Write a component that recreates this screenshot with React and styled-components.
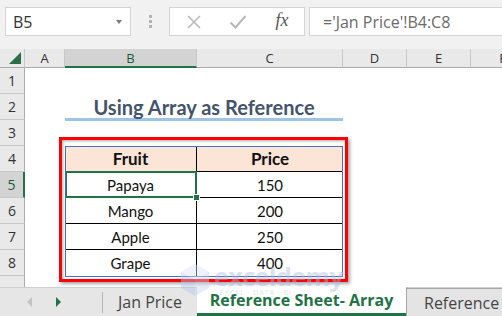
import React from "react";
import styled, { createGlobalStyle } from "styled-components";

const GlobalStyle = createGlobalStyle`
  html, body {
    margin: 0;
    padding: 0;
    background: #fff;
  }
  body {
    width: 502px;
    height: 316px;
    overflow: hidden;
    font-family: "Open Sans", "Noto Sans", sans-serif;
  }
`;

const columns = ["A", "B", "C", "D", "E", "F"];
const rows = [1, 2, 3, 4, 5, 6, 7, 8, 9];
const fruits = [
  ["Papaya", "150"],
  ["Mango", "200"],
  ["Apple", "250"],
  ["Grape", "400"],
];

const App = () => {
  return (
    <>
      <GlobalStyle />
      <Window>
        <FormulaBar>
          <NameBox>
            <span>B5</span>
            <Caret />
          </NameBox>
          <Dots>
            <Dot />
            <Dot />
            <Dot />
          </Dots>
          <FuncBox>
            <IconSlot>
              <svg width="16" height="16" viewBox="0 0 16 16">
                <path d="M2 2 L14 14 M14 2 L2 14" stroke="#b9b9b9" strokeWidth="1.6" fill="none" />
              </svg>
            </IconSlot>
            <IconSlot>
              <svg width="18" height="16" viewBox="0 0 18 16">
                <path d="M1.5 8.5 L6.5 13.5 L16.5 2" stroke="#b9b9b9" strokeWidth="2.2" fill="none" />
              </svg>
            </IconSlot>
            <IconSlot>
              <Fx>fx</Fx>
            </IconSlot>
          </FuncBox>
          <FormulaInput>='Jan Price'!B4:C8</FormulaInput>
        </FormulaBar>

        <SheetArea>
          <Grid>
            <Corner>
              <CornerMark />
            </Corner>
            {columns.map((c) => (
              <ColHeader key={c} $selected={c === "B"}>
                {c}
              </ColHeader>
            ))}
            {rows.map((r) => (
              <RowHeader key={r} $row={r + 1} $selected={r === 5}>
                {r < 9 ? r : ""}
              </RowHeader>
            ))}
            <Title>Using Array as Reference</Title>
            <Table>
              <TCell $head $first>
                Fruit
              </TCell>
              <TCell $head>Price</TCell>
              {fruits.map(([name, price], i) => (
                <React.Fragment key={name}>
                  <TCell $first $selected={i === 0} $last={i === fruits.length - 1}>
                    {name}
                  </TCell>
                  <TCell $last={i === fruits.length - 1}>{price}</TCell>
                </React.Fragment>
              ))}
            </Table>
          </Grid>
          <RedFrame />
        </SheetArea>

        <TabBar>
          <NavArrows>
            <ArrowLeft />
            <ArrowRight />
          </NavArrows>
          <TabDivider />
          <Tab $width={94}>Jan Price</Tab>
          <Tab $width={209} $active>
            Reference Sheet- Array
          </Tab>
          <Tab $width={110} $outlined>
            Reference
          </Tab>
        </TabBar>

        <Watermark>
          <svg width="30" height="34" viewBox="0 0 30 34">
            <path d="M15 1 L29 9 L29 25 L15 33 L1 25 L1 9 Z" fill="#c9d6ee" />
            <path d="M15 1 L29 9 L15 17 L1 9 Z" fill="#dbe4f4" />
            <path d="M15 17 L15 33 L1 25 L1 9 Z" fill="#b7c8e8" />
          </svg>
          <MarkText>
            <MarkName>exceldemy</MarkName>
            <MarkSub>EXCEL · DATA · BI</MarkSub>
          </MarkText>
        </Watermark>
      </Window>
    </>
  );
};

const Window = styled.div`
  position: relative;
  width: 502px;
  height: 316px;
  display: flex;
  flex-direction: column;
  overflow: hidden;
`;

const FormulaBar = styled.div`
  height: 49px;
  flex: none;
  box-sizing: border-box;
  padding-top: 7px;
  display: flex;
  align-items: flex-start;
  background: #f1f1f1;
`;

const Box = styled.div`
  height: 29px;
  flex: none;
  box-sizing: border-box;
  background: #fff;
  border: 1px solid #d4d4d4;
  display: flex;
  align-items: center;
`;

const NameBox = styled(Box)`
  margin-left: 5px;
  width: 126px;
  padding: 0 8px 0 7px;
  justify-content: space-between;
  font-size: 16px;
  color: #333;
`;

const Caret = styled.div`
  width: 0;
  height: 0;
  border-left: 3.5px solid transparent;
  border-right: 3.5px solid transparent;
  border-top: 4px solid #7a7a7a;
`;

const Dots = styled.div`
  width: 38px;
  height: 29px;
  flex: none;
  display: flex;
  flex-direction: column;
  align-items: center;
  justify-content: center;
  gap: 2px;
`;

const Dot = styled.div`
  width: 3px;
  height: 3px;
  background: #b3b3b3;
`;

const FuncBox = styled(Box)`
  width: 136px;
  padding-left: 2px;
`;

const IconSlot = styled.div`
  width: 44px;
  height: 100%;
  display: flex;
  align-items: center;
  justify-content: center;
`;

const Fx = styled.span`
  font-family: "Liberation Serif", "DejaVu Serif", serif;
  font-style: italic;
  font-size: 18px;
  color: #555;
  margin-top: -2px;
`;

const FormulaInput = styled(Box)`
  flex: 1;
  margin-left: 4px;
  border-right: none;
  padding-left: 13px;
  font-size: 16px;
  color: #6b6b6b;
  white-space: nowrap;
  overflow: hidden;
`;

const SheetArea = styled.div`
  position: relative;
  flex: 1;
  overflow: hidden;
  background: #fff;
`;

const Grid = styled.div`
  display: grid;
  grid-template-columns: 25px 40px 132px 146px 64px 64px 64px;
  grid-template-rows: 19px repeat(8, 26px) 26px;
  font-family: "Open Sans", "Noto Sans", sans-serif;
`;

const Corner = styled.div`
  grid-column: 1;
  grid-row: 1;
  background: #e9e9e9;
  border-right: 1px solid #c8c8c8;
  border-bottom: 1px solid #ababab;
  display: flex;
  align-items: flex-end;
  justify-content: flex-end;
  padding: 0 3px 3px 0;
`;

const CornerMark = styled.div`
  width: 0;
  height: 0;
  border-left: 12px solid transparent;
  border-bottom: 12px solid #2f6e45;
`;

const ColHeader = styled.div`
  grid-row: 1;
  box-sizing: border-box;
  display: flex;
  align-items: center;
  justify-content: center;
  font-size: 13px;
  background: ${(p) => (p.$selected ? "#d3d3d3" : "#e9e9e9")};
  color: ${(p) => (p.$selected ? "#1d5a37" : "#333")};
  border-right: 1px solid #c8c8c8;
  border-bottom: ${(p) => (p.$selected ? "2px solid #217346" : "1px solid #ababab")};
  padding-top: ${(p) => (p.$selected ? "1px" : "0")};
`;

const RowHeader = styled.div`
  grid-column: 1;
  grid-row: ${(p) => p.$row};
  box-sizing: border-box;
  display: flex;
  align-items: center;
  justify-content: center;
  font-size: 14px;
  background: ${(p) => (p.$selected ? "#d3d3d3" : "#e9e9e9")};
  color: ${(p) => (p.$selected ? "#1d5a37" : "#333")};
  border-bottom: 1px solid #c8c8c8;
  border-right: ${(p) => (p.$selected ? "2px solid #217346" : "1px solid #ababab")};
`;

const Title = styled.div`
  grid-column: 3 / 5;
  grid-row: 3;
  box-sizing: border-box;
  display: flex;
  align-items: center;
  justify-content: center;
  padding-top: 1px;
  font-family: Lato, "Liberation Sans", sans-serif;
  font-weight: 700;
  font-size: 20px;
  color: #44546a;
  border-bottom: 3px solid #9dc3e6;
  margin-bottom: -1px;
`;

const Table = styled.div`
  grid-column: 3 / 5;
  grid-row: 5 / 10;
  position: relative;
  display: grid;
  grid-template-columns: 132px 146px;
  grid-template-rows: repeat(5, 26px);
  font-family: Lato, "Liberation Sans", sans-serif;

  &::after {
    content: "";
    position: absolute;
    inset: 0 0 -1px 0;
    border: 1px solid #4472c4;
    pointer-events: none;
  }
`;

const TCell = styled.div`
  position: relative;
  box-sizing: border-box;
  display: flex;
  align-items: center;
  justify-content: center;
  color: #111;
  font-size: ${(p) => (p.$head ? "17px" : "15px")};
  font-weight: ${(p) => (p.$head ? 700 : 400)};
  background: ${(p) => (p.$head ? "#fce4d6" : "#fff")};
  border-bottom: ${(p) => (p.$last ? "none" : "1px solid #000")};
  border-right: ${(p) => (p.$first ? "1px solid #000" : "none")};

  ${(p) =>
    p.$selected &&
    `
    &::after {
      content: "";
      position: absolute;
      inset: -1px -1px -1px 0;
      border: 2px solid #217346;
      pointer-events: none;
    }
    &::before {
      content: "";
      position: absolute;
      right: -4px;
      bottom: -4px;
      width: 5px;
      height: 5px;
      background: #217346;
      border: 1px solid #fff;
      z-index: 2;
    }
  `}
`;

const RedFrame = styled.div`
  position: absolute;
  left: 59px;
  top: 88px;
  width: 289px;
  height: 145px;
  box-sizing: border-box;
  border: 3px solid #ff0000;
  box-shadow: 2px 2px 3px rgba(0, 0, 0, 0.35), inset 1px 1px 3px rgba(0, 0, 0, 0.35);
  pointer-events: none;
`;

const TabBar = styled.div`
  height: 29px;
  flex: none;
  box-sizing: border-box;
  display: flex;
  align-items: stretch;
  background: #e6e6e6;
  border-top: 1px solid #d0d0d0;
  font-family: "Open Sans", "Noto Sans", sans-serif;
`;

const NavArrows = styled.div`
  width: 102px;
  flex: none;
  display: flex;
  align-items: center;
  padding-left: 27px;
  box-sizing: border-box;
  gap: 24px;
`;

const ArrowLeft = styled.div`
  width: 0;
  height: 0;
  border-top: 5px solid transparent;
  border-bottom: 5px solid transparent;
  border-right: 5px solid #c3c3c3;
`;

const ArrowRight = styled.div`
  width: 0;
  height: 0;
  border-top: 5px solid transparent;
  border-bottom: 5px solid transparent;
  border-left: 5px solid #217346;
`;

const TabDivider = styled.div`
  width: 1px;
  flex: none;
  height: 21px;
  align-self: center;
  background: #b5b5b5;
`;

const Tab = styled.div`
  width: ${(p) => p.$width}px;
  flex: none;
  box-sizing: border-box;
  display: flex;
  align-items: center;
  justify-content: ${(p) => (p.$outlined ? "flex-start" : "center")};
  padding-left: ${(p) => (p.$outlined ? "17px" : "0")};
  font-size: 16px;
  white-space: nowrap;
  color: ${(p) => (p.$active ? "#217346" : "#444")};
  font-weight: ${(p) => (p.$active ? 700 : 400)};
  background: ${(p) => (p.$active ? "#fff" : p.$outlined ? "#e4e4e4" : "transparent")};
  margin-top: ${(p) => (p.$active ? "-1px" : "0")};
  border-bottom: ${(p) => (p.$active ? "3px solid #217346" : "none")};
  border-top: ${(p) => (p.$outlined ? "1px solid #a6a6a6" : "none")};
  border-left: ${(p) => (p.$outlined ? "1px solid #a6a6a6" : "none")};
  box-shadow: ${(p) => (p.$active ? "1px 0 2px rgba(0,0,0,0.2)" : "none")};
`;

const Watermark = styled.div`
  position: absolute;
  left: 180px;
  top: 263px;
  display: flex;
  align-items: center;
  gap: 4px;
  opacity: 0.45;
  pointer-events: none;
`;

const MarkText = styled.div`
  display: flex;
  flex-direction: column;
  line-height: 1;
`;

const MarkName = styled.span`
  font-family: "Open Sans", sans-serif;
  font-weight: 700;
  font-size: 25px;
  color: #a9bde3;
  letter-spacing: -0.5px;
`;

const MarkSub = styled.span`
  font-family: "Open Sans", sans-serif;
  font-size: 7px;
  color: #b8c4d8;
  letter-spacing: 1px;
  padding-left: 6px;
`;

export default App;
